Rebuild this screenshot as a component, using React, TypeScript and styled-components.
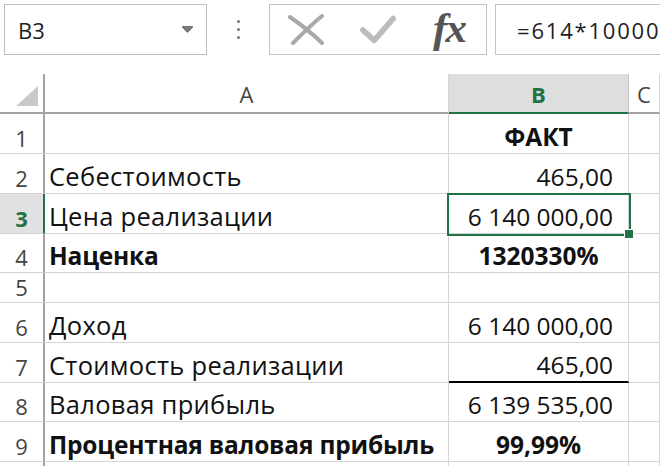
import React from "react";
import styled, { createGlobalStyle } from "styled-components";

const GlobalStyle = createGlobalStyle`
  html, body { margin: 0; padding: 0; background: #ffffff; }
  body { width: 660px; height: 466px; overflow: hidden; font-family: "Open Sans", "Noto Sans", sans-serif; }
`;

const GREEN = "#217346";
const GRID = "#d4d4d4";
const HEAD_LINE = "#a3a3a3";

const Page = styled.div`
  width: 660px;
  height: 466px;
  overflow: hidden;
  background: #fff;
`;

const Toolbar = styled.div`
  display: flex;
  height: 55px;
  box-sizing: border-box;
  padding: 4px 0 0 4px;
  margin-bottom: 19px;
`;

const NameBox = styled.div`
  width: 203px;
  box-sizing: border-box;
  border: 1px solid #bdbdbd;
  display: flex;
  align-items: center;
  justify-content: space-between;
  padding: 0 13px 0 13px;
  font-size: 22px;
  color: #1e1e1e;
`;

const DotsArea = styled.div`
  width: 62px;
  display: flex;
  flex-direction: column;
  align-items: center;
  justify-content: center;
  gap: 5px;
`;

const Dot = styled.span`
  width: 3px;
  height: 3px;
  border-radius: 50%;
  background: #7a7a7a;
`;

const ButtonGroup = styled.div`
  width: 218px;
  box-sizing: border-box;
  border: 1px solid #c3c3c3;
  display: flex;
  align-items: center;
  padding-left: 18px;
  gap: 36px;
`;

const IconSlot = styled.div`
  width: 36px;
  height: 44px;
  display: flex;
  align-items: center;
  justify-content: center;
`;

const Fx = styled.span`
  font-family: "Liberation Serif", "DejaVu Serif", serif;
  font-style: italic;
  font-weight: 700;
  font-size: 43px;
  color: #555;
  line-height: 1;
  letter-spacing: -2px;
  transform: translate(-1px, -2px);
`;

const FormulaBox = styled.div`
  flex: 1;
  margin-left: 8px;
  box-sizing: border-box;
  border: 1px solid #c3c3c3;
  border-right: none;
  display: flex;
  align-items: center;
  padding-left: 21px;
  font-size: 22px;
  letter-spacing: 1.8px;
  color: #1e1e1e;
  white-space: nowrap;
  overflow: hidden;
`;

const COLS = "45px 404px 180px 1fr";

const Row = styled.div<{ $h: number }>`
  display: grid;
  grid-template-columns: ${COLS};
  height: ${(p) => p.$h}px;
`;

const Corner = styled.div`
  box-sizing: border-box;
  border-right: 2px solid ${HEAD_LINE};
  border-bottom: 2px solid ${HEAD_LINE};
  display: flex;
  align-items: flex-end;
  justify-content: flex-end;
  padding: 0 5px 6px 0;
`;

const ColHead = styled.div<{ $sel?: boolean }>`
  box-sizing: border-box;
  border-right: 1px solid ${(p) => (p.$sel ? "#c6c6c6" : GRID)};
  border-bottom: 2px solid ${(p) => (p.$sel ? GREEN : HEAD_LINE)};
  background: ${(p) => (p.$sel ? "#dedede" : "#fff")};
  color: ${(p) => (p.$sel ? GREEN : "#444")};
  font-weight: ${(p) => (p.$sel ? 700 : 400)};
  font-size: 22px;
  display: flex;
  align-items: flex-end;
  justify-content: center;
  padding-bottom: 3px;
  overflow: hidden;
`;

const RowHead = styled.div<{ $sel?: boolean }>`
  box-sizing: border-box;
  border-right: 2px solid ${(p) => (p.$sel ? GREEN : HEAD_LINE)};
  border-bottom: 1px solid ${GRID};
  background: ${(p) => (p.$sel ? "#e1e1e1" : "#fff")};
  color: ${(p) => (p.$sel ? GREEN : "#444")};
  font-weight: ${(p) => (p.$sel ? 700 : 400)};
  font-size: 22px;
  display: flex;
  align-items: flex-end;
  justify-content: center;
  overflow: hidden;
`;

const Cell = styled.div<{
  $align?: "left" | "right" | "center";
  $bold?: boolean;
  $thick?: boolean;
}>`
  position: relative;
  box-sizing: border-box;
  border-right: 1px solid ${GRID};
  border-bottom: ${(p) => (p.$thick ? "2px solid #000" : `1px solid ${GRID}`)};
  display: flex;
  align-items: flex-end;
  justify-content: ${(p) =>
    p.$align === "right" ? "flex-end" : p.$align === "center" ? "center" : "flex-start"};
  padding: ${(p) => (p.$align === "right" ? "0 15px 0 4px" : p.$align === "center" ? "0" : "0 4px")};
  font-size: ${(p) => (p.$align === "left" && !p.$bold ? "25.5px" : "24.5px")};
  font-weight: ${(p) => (p.$bold ? 700 : 400)};
  letter-spacing: ${(p) =>
    p.$align === "left" ? (p.$bold ? "-0.2px" : "0.3px") : "0"};
  color: #111;
  white-space: nowrap;
`;

const Selection = styled.div`
  position: absolute;
  left: -2px;
  top: -1px;
  right: -3px;
  bottom: -3px;
  border: 2px solid ${GREEN};
  z-index: 2;
  pointer-events: none;
`;

const FillHandle = styled.div`
  position: absolute;
  right: -5px;
  bottom: -5px;
  width: 8px;
  height: 8px;
  background: ${GREEN};
  border: 1px solid #ffffff;
`;

type Data = {
  n: string;
  h: number;
  a?: string;
  aBold?: boolean;
  b?: string;
  bAlign?: "right" | "center";
  bBold?: boolean;
  sel?: boolean;
  thick?: boolean;
};

const rows: Data[] = [
  { n: "1", h: 40, b: "ФАКТ", bAlign: "center", bBold: true },
  { n: "2", h: 40, a: "Себестоимость", b: "465,00" },
  { n: "3", h: 40, a: "Цена реализации", b: "6 140 000,00", sel: true },
  { n: "4", h: 39, a: "Наценка", aBold: true, b: "1320330%", bAlign: "center", bBold: true },
  { n: "5", h: 30 },
  { n: "6", h: 40, a: "Доход", b: "6 140 000,00" },
  { n: "7", h: 40, a: "Стоимость реализации", b: "465,00", thick: true },
  { n: "8", h: 39, a: "Валовая прибыль", b: "6 139 535,00" },
  { n: "9", h: 40, a: "Процентная валовая прибыль", aBold: true, b: "99,99%", bAlign: "center", bBold: true },
  { n: "", h: 12 },
];

export default function App() {
  return (
    <Page>
      <GlobalStyle />
      <Toolbar>
        <NameBox>
          <span>B3</span>
          <svg width="11" height="7" viewBox="0 0 11 7">
            <path d="M0 0.5 H11 M0.5 1.5 L5.5 6.5 L10.5 1.5 Z" fill="#7a7a7a" stroke="#7a7a7a" strokeWidth="1" />
          </svg>
        </NameBox>
        <DotsArea>
          <Dot />
          <Dot />
          <Dot />
        </DotsArea>
        <ButtonGroup>
          <IconSlot>
            <svg width="36" height="32" viewBox="0 0 36 32">
              <path d="M2 3 C 12 10, 24 19, 34 29" fill="none" stroke="#a9a9a9" strokeWidth="4" strokeLinecap="round" />
              <path d="M5 29 C 14 20, 24 10, 34 2" fill="none" stroke="#a9a9a9" strokeWidth="4" strokeLinecap="round" />
            </svg>
          </IconSlot>
          <IconSlot>
            <svg width="38" height="30" viewBox="0 0 38 30">
              <path d="M3 15 L15 26 L35 3" fill="none" stroke="#bcbcbc" strokeWidth="6" strokeLinecap="round" strokeLinejoin="round" />
            </svg>
          </IconSlot>
          <IconSlot>
            <Fx>fx</Fx>
          </IconSlot>
        </ButtonGroup>
        <FormulaBox>=614*10000</FormulaBox>
      </Toolbar>

      <Row $h={40}>
        <Corner>
          <svg width="22" height="20" viewBox="0 0 22 20">
            <path d="M0 20 L22 20 L22 0 Z" fill="#c9c9c9" />
          </svg>
        </Corner>
        <ColHead>A</ColHead>
        <ColHead $sel>B</ColHead>
        <ColHead>C</ColHead>
      </Row>

      {rows.map((r, i) => (
        <Row key={i} $h={r.h}>
          <RowHead $sel={r.sel}>{r.n}</RowHead>
          <Cell $align="left" $bold={r.aBold}>{r.a}</Cell>
          <Cell $align={r.bAlign ?? "right"} $bold={r.bBold} $thick={r.thick}>
            {r.b}
            {r.sel && (
              <Selection>
                <FillHandle />
              </Selection>
            )}
          </Cell>
          <Cell />
        </Row>
      ))}
    </Page>
  );
}
